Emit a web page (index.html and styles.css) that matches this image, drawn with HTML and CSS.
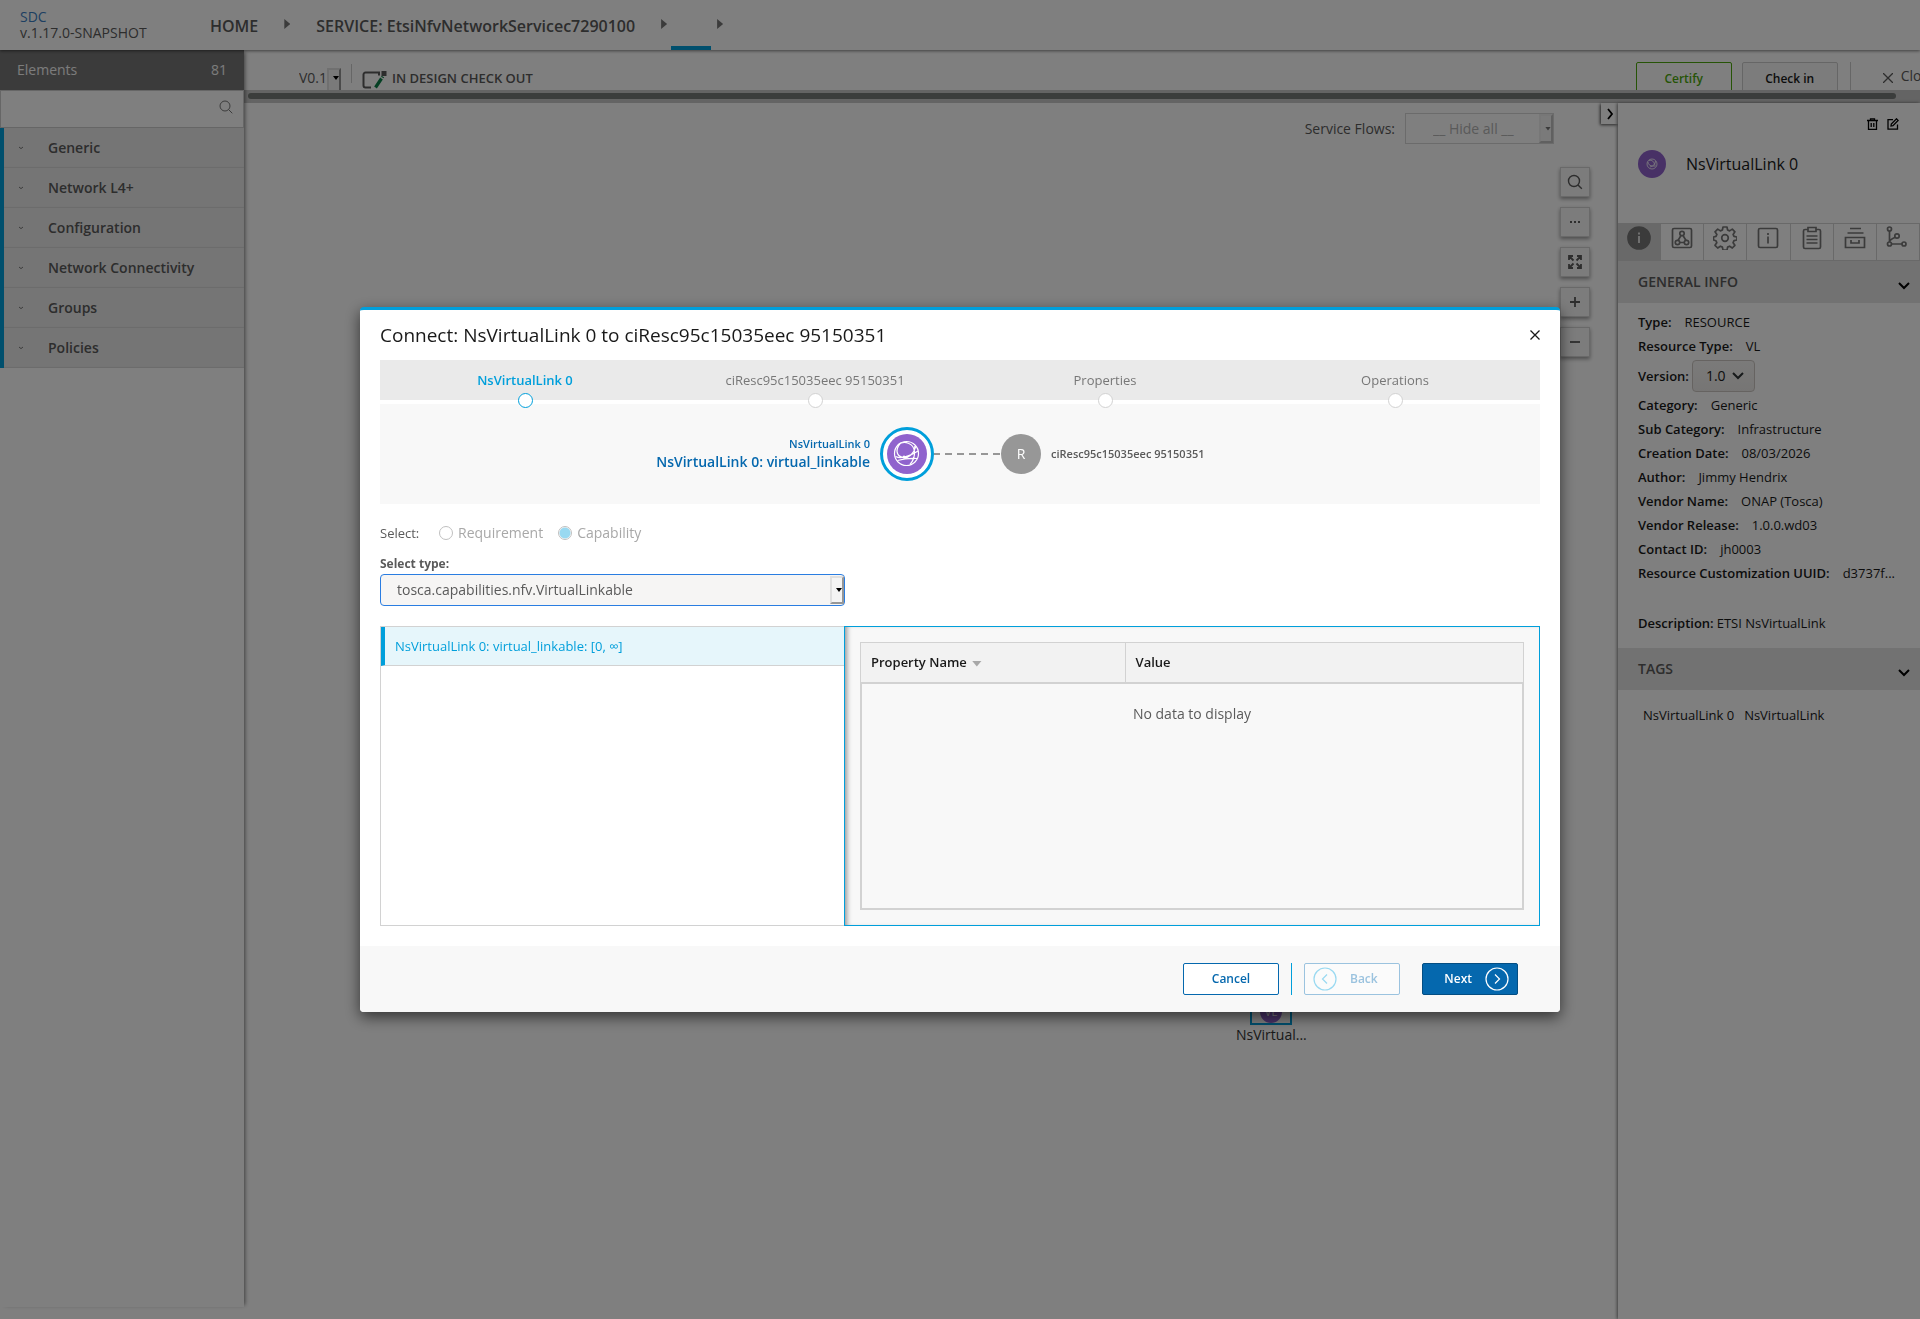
FILE: index.html
```html
<!DOCTYPE html>
<html lang="en">
<head>
<meta charset="utf-8">
<title>SDC</title>
<link rel="stylesheet" href="styles.css">
</head>
<body>
<div class="app">
  <header class="topbar">
    <div class="brand"><a class="brand-name" href="#">SDC</a><span class="brand-version">v.1.17.0-SNAPSHOT</span></div>
    <nav class="crumbs">
      <a href="#">HOME</a><i class="crumb-arrow"></i>
      <a href="#">SERVICE: EtsiNfvNetworkServicec7290100</a><i class="crumb-arrow"></i>
      <span class="crumb-current"></span><i class="crumb-arrow last"></i>
    </nav>
  </header>

  <div class="body">
    <aside class="sidebar">
      <div class="sidebar-head"><span>Elements</span><span>81</span></div>
      <div class="search">
        <input type="text" aria-label="Search elements">
        <svg width="14" height="14" viewBox="0 0 14 14"><circle cx="6" cy="6" r="5" /><path d="M9.6 9.6L13.3 13.3"/></svg>
      </div>
      <ul class="groups">
        <li><svg width="6" height="4" viewBox="0 0 6 4"><path d="M1 1l2 1.600L5 1"/></svg>Generic</li>
        <li><svg width="6" height="4" viewBox="0 0 6 4"><path d="M1 1l2 1.600L5 1"/></svg>Network L4+</li>
        <li><svg width="6" height="4" viewBox="0 0 6 4"><path d="M1 1l2 1.600L5 1"/></svg>Configuration</li>
        <li><svg width="6" height="4" viewBox="0 0 6 4"><path d="M1 1l2 1.600L5 1"/></svg>Network Connectivity</li>
        <li><svg width="6" height="4" viewBox="0 0 6 4"><path d="M1 1l2 1.600L5 1"/></svg>Groups</li>
        <li><svg width="6" height="4" viewBox="0 0 6 4"><path d="M1 1l2 1.600L5 1"/></svg>Policies</li>
      </ul>
    </aside>

    <main class="main">
      <div class="toolbar">
        <div class="toolbar-row">
          <div class="picker version-picker"><select aria-label="Version"><option>V0.1</option></select></div>
          <i class="bar-sep"></i>
          <svg class="state-icon" width="25" height="18" viewBox="0 0 25 18"><path d="M9 16.500H3.500a2 2 0 0 1-2-2V3.500a2 2 0 0 1 2-2H17v3" fill="none" stroke="#5a5a5a" stroke-width="2"/><rect x="19.500" y="0" width="5" height="5" fill="#5a5a5a"/><path d="M13.500 16.500l6-9" stroke="#0a8048" stroke-width="3.200"/><path d="M20.300 6.500l.6-.9" stroke="#0a8048" stroke-width="3"/></svg>
          <span class="state">IN DESIGN CHECK OUT</span>
          <div class="toolbar-actions">
            <button class="btn certify">Certify</button>
            <button class="btn checkin">Check in</button>
            <i class="bar-sep tall"></i>
            <button class="close-link"><svg width="10" height="10" viewBox="0 0 10 10"><path d="M0 0L10 10M10 0L0 10"/></svg>Close</button>
          </div>
        </div>
      </div>
      <div class="scroll-track"><div class="scroll-thumb"></div></div>

      <div class="workspace">
        <section class="canvas">
          <div class="flows">
            <label for="flows">Service Flows:</label>
            <div class="picker flow-picker"><select id="flows" disabled><option>__ Hide all __</option></select></div>
          </div>
          <div class="zoom-tools">
            <button aria-label="Search"><svg width="16" height="16" viewBox="0 0 16 16"><circle cx="7" cy="7" r="5.500"/><path d="M11 11l3.800 3.800"/></svg></button>
            <button aria-label="More"><svg width="16" height="16" viewBox="0 0 16 16"><path stroke-width="2" d="M3 8h2M7 8h2M11 8h2"/></svg></button>
            <button aria-label="Fit"><svg width="16" height="16" viewBox="0 0 16 16"><path stroke-width="1.800" d="M2 6V2h4M2 2l4.500 4.500M10 2h4v4M14 2L9.500 6.500M2 10v4h4M2 14l4.500-4.500M14 10v4h-4M14 14L9.500 9.500"/></svg></button>
            <button aria-label="Zoom in"><svg width="16" height="16" viewBox="0 0 16 16"><path stroke-width="1.800" d="M8 3v10M3 8h10"/></svg></button>
            <button aria-label="Zoom out"><svg width="16" height="16" viewBox="0 0 16 16"><path stroke-width="1.800" d="M3 8h10"/></svg></button>
          </div>
          <div class="node"><div class="node-box"><span>VL</span></div><div class="node-name">NsVirtual...</div></div>
          <button class="collapse" aria-label="Collapse panel"><svg width="8" height="12" viewBox="0 0 8 12"><path d="M2 1l4 5-4 5"/></svg></button>
        </section>

        <aside class="details">
          <div class="details-tools">
            <button aria-label="Delete"><svg width="11" height="12" viewBox="0 0 11 12"><path d="M0 2.500h11M3.500 2.500V.8h4v1.700M1.500 2.500v8.800h8V2.500M4.200 5v4M6.800 5v4"/></svg></button>
            <button aria-label="Edit"><svg width="12" height="12" viewBox="0 0 12 12"><path d="M6 1.700H1v9.500h9.500V6.500M4 8l.3-2L9.500.8l1.600 1.600L6 7.700z"/></svg></button>
          </div>
          <div class="details-title">
            <svg width="28" height="28" viewBox="0 0 28 28"><circle cx="14" cy="14" r="14" fill="#9063cd"/><g fill="none" stroke="#fff" stroke-width=".8"><circle cx="14" cy="14" r="5"/><path d="M11 10.500c3-1 5 1 6 5M17.500 11c0 3-2 5-5.500 6M10 12c0 3 3 4.500 7.500 4"/></g></svg>
            <h2>NsVirtualLink 0</h2>
          </div>
          <div class="tabs">
            <button class="active" aria-label="Information"><svg width="24" height="24" viewBox="0 0 24 24"><circle cx="12" cy="12" r="11" fill="#777"/><path d="M12 10v7M12 6.500v2" stroke="#e0e0e0" stroke-width="2"/></svg></button>
            <button aria-label="Composition"><svg width="24" height="24" viewBox="0 0 24 24"><rect x="2.500" y="2.500" width="19" height="19" rx="1.500"/><circle cx="12" cy="7.500" r="2.200"/><circle cx="7.500" cy="16.500" r="2.200"/><circle cx="16.500" cy="16.500" r="2.200"/><path d="M11 9.500l-3 5M13 9.500l3 5M10 16.500h4"/></svg></button>
            <button aria-label="Properties"><svg width="24" height="24" viewBox="0 0 24 24"><circle cx="12" cy="12" r="3.300"/><path d="M10 1h4l.6 3 2 .9 2.700-1.800 2.600 2.700-1.800 2.600.9 2 3 .6v3l-3 .7-.9 2 1.800 2.600-2.600 2.700-2.700-1.800-2 .9-.6 3h-4l-.6-3-2-.9L4.700 22 2 19.300l1.800-2.600-.9-2L.5 14v-3l2.500-.6.9-2L2 5.800l2.700-2.700 2.700 1.800 2-.9z" stroke-linejoin="round"/></svg></button>
            <button aria-label="Inputs"><svg width="24" height="24" viewBox="0 0 24 24"><rect x="2.500" y="2.500" width="19" height="19" rx="1.500"/><path d="M12 10.500v7M12 7v2"/></svg></button>
            <button aria-label="Artifacts"><svg width="24" height="24" viewBox="0 0 24 24"><path d="M8 3.500H5A1.500 1.500 0 0 0 3.500 5v16A1.500 1.500 0 0 0 5 22.500h14a1.500 1.500 0 0 0 1.500-1.500V5A1.500 1.500 0 0 0 19 3.500h-3M8 1.500h8v4H8zM6.500 10h11M6.500 13.500h11M6.500 17h11"/></svg></button>
            <button aria-label="Requirements"><svg width="24" height="24" viewBox="0 0 24 24"><path d="M7 2.500h11M4.500 7h16M2.500 11.500h19v10h-19zM8 14v3h8v-3"/></svg></button>
            <button aria-label="Dependencies"><svg width="24" height="24" viewBox="0 0 24 24"><circle cx="3.500" cy="3" r="2"/><circle cx="3.500" cy="18" r="2"/><circle cx="18" cy="18" r="2"/><circle cx="11" cy="10" r="2.200"/><path d="M3.500 5v11M5.500 18H16M9.300 11.300C6 12.500 3.800 14 3.600 16"/></svg></button>
          </div>
          <div class="section-head"><span>GENERAL INFO</span><svg width="12" height="8" viewBox="0 0 12 8"><path d="M1 1l5 5 5-5"/></svg></div>
          <dl class="facts">
            <div><dt>Type:</dt><dd>RESOURCE</dd></div>
            <div><dt>Resource Type:</dt><dd>VL</dd></div>
            <div class="fact-version"><dt><label for="ver">Version:</label></dt><dd><select id="ver"><option>1.0</option></select><svg width="12" height="8" viewBox="0 0 12 8"><path d="M1 1l5 5 5-5"/></svg></dd></div>
            <div><dt>Category:</dt><dd>Generic</dd></div>
            <div><dt>Sub Category:</dt><dd>Infrastructure</dd></div>
            <div><dt>Creation Date:</dt><dd>08/03/2026</dd></div>
            <div><dt>Author:</dt><dd>Jimmy Hendrix</dd></div>
            <div><dt>Vendor Name:</dt><dd>ONAP (Tosca)</dd></div>
            <div><dt>Vendor Release:</dt><dd>1.0.0.wd03</dd></div>
            <div><dt>Contact ID:</dt><dd>jh0003</dd></div>
            <div><dt>Resource Customization UUID:</dt><dd>d3737f...</dd></div>
            <div class="fact-description"><dt>Description:</dt><dd>ETSI NsVirtualLink</dd></div>
          </dl>
          <div class="section-head"><span>TAGS</span><svg width="12" height="8" viewBox="0 0 12 8"><path d="M1 1l5 5 5-5"/></svg></div>
          <div class="tags"><span>NsVirtualLink 0</span><span>NsVirtualLink</span></div>
        </aside>
      </div>
    </main>
  </div>
</div>

<div class="overlay">
  <div class="modal" role="dialog" aria-labelledby="modal-title">
    <div class="modal-body">
      <div class="modal-head">
        <h1 id="modal-title">Connect: NsVirtualLink 0 to ciResc95c15035eec 95150351</h1>
        <button class="modal-close" aria-label="Close"><svg width="10" height="10" viewBox="0 0 10 10"><path d="M.5.500l9 9M9.500.500l-9 9"/></svg></button>
      </div>
      <ol class="steps">
        <li class="current">NsVirtualLink 0</li>
        <li>ciResc95c15035eec 95150351</li>
        <li>Properties</li>
        <li>Operations</li>
      </ol>
      <div class="link-view">
        <div class="link-from"><span class="from-name">NsVirtualLink 0</span><span class="from-cap">NsVirtualLink 0: virtual_linkable</span></div>
        <div class="ring"><svg width="40" height="40" viewBox="0 0 40 40"><circle cx="20" cy="20" r="20" fill="#9063cd"/><g fill="none" stroke="#fff" stroke-width="1.200"><circle cx="19.500" cy="19.500" r="12"/><path d="M11 10.800C17 6 27 9 27.500 18c.3 5-1.500 9-4.500 12.500M13.500 9c-5 6-5 13 2.500 14.500 6 1 11-4 12.500-10.500M17 23c5-1 10-3.500 14-6M8.500 22.500c3 1.500 6 1.500 9 .5M10.500 26.500c7-2 14-2.500 20-2"/></g><circle cx="17" cy="23" r="1.500" fill="#fff"/><circle cx="28" cy="13" r="1.100" fill="#fff"/></svg></div>
        <svg class="dash" width="67" height="2" viewBox="0 0 67 2"><path d="M0 1h67" stroke="#979797" stroke-width="2" stroke-dasharray="7 5" stroke-dashoffset="1"/></svg>
        <div class="r-badge">R</div>
        <div class="link-to">ciResc95c15035eec 95150351</div>
      </div>
      <fieldset class="kind">
        <legend>Select:</legend>
        <label><input type="radio" name="kind" disabled>Requirement</label>
        <label><input type="radio" name="kind" checked disabled>Capability</label>
      </fieldset>
      <label class="type-label" for="type">Select type:</label>
      <div class="picker type-picker"><select id="type"><option>tosca.capabilities.nfv.VirtualLinkable</option></select></div>
      <div class="panes">
        <ul class="cap-list"><li>NsVirtualLink 0: virtual_linkable: [0, ∞]</li></ul>
        <div class="props">
          <table>
            <thead><tr><th class="col-name">Property Name<i class="sort"></i></th><th>Value</th></tr></thead>
            <tbody><tr><td colspan="2">No data to display</td></tr></tbody>
          </table>
        </div>
      </div>
    </div>
    <footer class="modal-foot">
      <button class="btn cancel">Cancel</button>
      <i class="foot-sep"></i>
      <button class="btn back" disabled><svg width="24" height="24" viewBox="0 0 24 24"><circle cx="12" cy="12" r="11"/><path d="M14 7.500L9.500 12l4.500 4.500"/></svg><span>Back</span></button>
      <button class="btn next"><span>Next</span><svg width="24" height="24" viewBox="0 0 24 24"><circle cx="12" cy="12" r="11"/><path d="M10 7.500l4.500 4.500-4.500 4.500"/></svg></button>
    </footer>
  </div>
</div>
</body>
</html>
```
FILE: styles.css
```css
* { box-sizing: border-box; }
body, h1, h2, ul, ol, dl, dd, fieldset { margin: 0; padding: 0; }
ul, ol { list-style: none; }
fieldset { border: 0; }
body {
  font-family: "Open Sans", "Noto Sans", sans-serif;
  font-size: 13px;
  line-height: 18px;
  color: #5a5a5a;
  background: #fff;
}
button, input, select { font: inherit; color: inherit; margin: 0; }
button { padding: 0; border: 0; background: none; }
a { color: inherit; text-decoration: none; }
svg { display: block; flex: none; fill: none; }

.app { display: flex; flex-direction: column; height: 100vh; overflow: hidden; }

/* top bar */
.topbar {
  position: relative;
  z-index: 2;
  display: flex;
  height: 50px;
  padding-left: 20px;
  background: #fff;
  box-shadow: 0 1px 3px rgba(0, 0, 0, .5);
}
.brand { display: flex; flex-direction: column; width: 190px; padding-top: 9px; font-size: 14px; line-height: 16px; }
.brand-name { color: #3b7fc4; }
.crumbs { display: flex; align-items: center; font-size: 16px; font-weight: 600; }
.crumbs a { padding-top: 2px; }
.crumb-arrow { width: 6px; height: 10px; margin: 0 26px 2px; background: #777; clip-path: polygon(0 0, 100% 50%, 0 100%); }
.crumb-arrow.last { margin-left: 6px; }
.crumb-current { align-self: flex-end; width: 40px; height: 4px; margin-left: -22px; background: #009fdb; }

.body { display: flex; flex: 1; min-height: 0; }

/* element palette */
.sidebar { position: relative; z-index: 1; width: 244px; flex: none; margin-bottom: 12px; background: #fff; box-shadow: 3px 0 4px -2px rgba(0, 0, 0, .5); }
.sidebar-head { display: flex; justify-content: space-between; align-items: center; height: 40px; padding: 0 17px; background: #777; color: #f8f8f8; font-size: 14px; }
.search { position: relative; height: 38px; }
.search input { display: block; width: 100%; height: 38px; border: 1px solid #cdcdcd; background: #fff; }
.search svg { position: absolute; right: 11px; top: 10px; stroke: #777; }
.groups li {
  display: flex; align-items: center; gap: 24px;
  height: 40px; padding-left: 14px;
  border-left: 4px solid #009fdb;
  background: #eaeaea;
  box-shadow: inset 0 -1px 1px #d8d8d8;
  font-size: 14px; font-weight: 600;
}
.groups svg { stroke: #777; stroke-width: 1; }

/* toolbar */
.main { display: flex; flex-direction: column; flex: 1; min-width: 0; }
.toolbar { height: 40px; overflow: hidden; }
.toolbar-row { display: flex; align-items: flex-start; width: calc(100% + 16px); padding-left: 55px; padding-top: 12px; }
.picker { position: relative; }
.picker select { display: block; width: 100%; height: 100%; appearance: none; border: 0; background: none; outline: 0; }
.picker::after {
  content: "";
  position: absolute; right: 0; top: 0; bottom: 0; width: 10px;
  border: 2px solid;
  border-color: #e0e0e0 #979797 #979797 #e0e0e0;
  background: #f4f4f4;
  pointer-events: none;
}
.picker::before {
  content: "";
  position: absolute; z-index: 1; right: 2px; top: 50%; width: 6px; height: 4px;
  margin-top: -2px;
  background: #000;
  clip-path: polygon(0 0, 100% 0, 50% 100%);
  pointer-events: none;
}
.version-picker { width: 42px; height: 32px; font-size: 14px; }
.version-picker::after { top: 6px; }
.bar-sep { width: 1px; height: 19px; margin: 2px 10px 0; background: #cdcdcd; }
.bar-sep.tall { height: 32px; margin: 0 32px 0 12px; }
.state-icon { margin-top: 9px; }
.state { margin: 7px 0 0 5px; font-size: 13px; font-weight: 600; }
.toolbar-actions { display: flex; margin-left: auto; }
.btn { height: 32px; width: 96px; border: 1px solid #cdcdcd; border-radius: 2px; font-size: 12px; font-weight: 600; }
.certify, .checkin { padding-top: 2px; }
.certify { margin-right: 10px; border-color: #4ca90c; color: #4ca90c; }
.checkin { color: #191919; background: #f8f8f8; }
.close-link { display: flex; align-items: center; gap: 8px; height: 32px; font-size: 14px; padding-bottom: 4px; }
.close-link svg { stroke: #5a5a5a; stroke-width: 1.3; margin-top: 4px; }
.scroll-track { height: 13px; padding: 3px 24px 0 4px; background: #c8c8c8; }
.scroll-thumb { height: 6px; border-radius: 3px; background: #767b78; }

/* canvas */
.workspace { display: flex; flex: 1; min-height: 0; }
.canvas { position: relative; flex: 1; min-width: 0; }
.flows { display: flex; justify-content: flex-end; align-items: center; gap: 10px; padding: 10px 64px 0 0; font-size: 14px; }
.flow-picker { width: 149px; height: 31px; border: 1px solid #d6d6d6; color: #b4b4b4; }
.flow-picker select { padding-left: 27px; opacity: 1; }
.flow-picker::before { background: #777; }
.flow-picker::after { border-color: #eee #c0c0c0 #c0c0c0 #eee; }
.zoom-tools { display: flex; flex-direction: column; align-items: flex-end; gap: 10px; padding: 23px 28px 0 0; }
.zoom-tools button {
  display: grid; place-items: center;
  width: 30px; height: 30px;
  border: 1px solid #d2d2d2;
  background: #f8f8f8;
  box-shadow: 0 2px 4px rgba(0, 0, 0, .4);
}
.zoom-tools svg { stroke: #5a5a5a; stroke-width: 1.4; }
.node { position: absolute; left: 992px; top: 877px; width: 70px; text-align: center; font-size: 14px; color: #333; }
.node-box { display: grid; place-items: center; width: 42px; height: 45px; margin: 0 auto 1px; border: 2px solid #009fdb; }
.node-box span { width: 22px; height: 22px; border-radius: 50%; background: #9063cd; color: #fff; font-size: 11px; line-height: 22px; margin-top: 18px; }
.collapse {
  position: absolute; right: 0; top: 0;
  display: grid; place-items: center;
  width: 17px; height: 21px; background: #fff;
  box-shadow: -1px 1px 3px rgba(0, 0, 0, .7);
}
.collapse svg { stroke: #000; stroke-width: 1.8; }

/* details panel */
.details { position: relative; width: 302px; flex: none; background: #fff; box-shadow: -1px 0 3px rgba(0, 0, 0, .5); color: #191919; }
.details-tools { display: flex; justify-content: flex-end; gap: 9px; padding: 15px 21px 0 0; }
.details-tools svg { stroke: #000; stroke-width: 1.3; }
.details-title { display: flex; align-items: center; gap: 20px; height: 93px; padding: 0 20px 26px; }
.details-title h2 { font-size: 16px; font-weight: 400; }
.tabs { display: flex; height: 38px; border: solid #d2d2d2; border-width: 1px 0; }
.tabs button { display: flex; justify-content: center; flex: 1; padding-top: 2px; border-right: 1px solid #d2d2d2; }
.tabs button.active { background: #d2d2d2; }
.tabs svg { stroke: #777; stroke-width: 1.7; }
.section-head { display: flex; justify-content: space-between; align-items: center; height: 42px; padding: 0 10px 0 20px; background: #e4e4e4; color: #5a5a5a; font-size: 14px; font-weight: 600; }
.section-head svg { margin-top: 8px; stroke: #000; stroke-width: 2; }
.facts { padding: 7px 20px 13px; }
.facts > div { display: flex; align-items: center; gap: 13px; height: 24px; white-space: nowrap; }
.facts dt { font-weight: 600; }
.facts .fact-version { height: 35px; gap: 3px; }
.fact-version dd { display: flex; align-items: center; width: 63px; height: 32px; border: 1px solid #cdc7c2; border-radius: 4px; background: linear-gradient(#f6f5f4, #edebe9); }
.fact-version select { width: 39px; appearance: none; border: 0; padding: 0 0 0 13px; background: none; font-size: 14px; }
.fact-version svg { stroke: #2e3436; stroke-width: 2; }
.facts .fact-description { gap: 3px; margin-top: 26px; }
.tags { display: flex; gap: 10px; padding: 16px 25px; }

/* dialog */
.overlay { position: fixed; inset: 0; z-index: 10; display: flex; justify-content: center; align-items: center; background: rgba(0, 0, 0, .5); }
.modal { width: 1200px; border-top: 3px solid #009fdb; border-radius: 4px; background: #fff; box-shadow: 0 5px 15px rgba(0, 0, 0, .6); overflow: hidden; }
.modal-body { padding: 0 20px 20px; }
.modal-head { display: flex; justify-content: space-between; align-items: center; height: 50px; color: #191919; }
.modal-head h1 { font-size: 19px; font-weight: 400; }
.modal-close svg { stroke: #191919; stroke-width: 1.3; }
.steps { display: flex; height: 40px; background: #eaeaea; color: #777; }
.steps li { position: relative; flex: 1; text-align: center; line-height: 40px; }
.steps li::after {
  content: "";
  position: absolute; left: 50%; bottom: -8px; width: 13px; height: 13px; margin-left: -7px;
  border: 1px solid #d2d2d2; border-radius: 50%; background: #fff;
}
.steps .current { color: #009fdb; font-weight: 600; }
.steps .current::after { border-color: #009fdb; }
.link-view { display: flex; align-items: center; height: 100px; margin-top: 4px; background: #f8f8f8; }
.link-from { display: flex; flex-direction: column; align-items: flex-end; width: 490px; padding-bottom: 2px; color: #0568ae; font-weight: 600; }
.from-name { font-size: 11px; }
.from-cap { font-size: 14px; }
.ring { margin-left: 10px; padding: 4px; border: 3px solid #009fdb; border-radius: 50%; background: #fff; }
.r-badge { width: 40px; height: 40px; border-radius: 50%; background: #979797; color: #fff; font-size: 14px; line-height: 40px; text-align: center; }
.link-to { margin-left: 10px; font-size: 11px; font-weight: 600; }
.kind { display: flex; align-items: center; height: 58px; }
.kind legend { float: left; width: 59px; padding: 0; }
.kind label { display: flex; align-items: center; margin-right: 15px; color: #a8a8a8; font-size: 14px; }
.kind input { appearance: none; width: 14px; height: 14px; margin-right: 5px; border: 1px solid #c0c0c0; border-radius: 50%; background: #fff; }
.kind input:checked { background: radial-gradient(circle, #99d9f1 5px, #fff 6px); }
.type-label { display: block; height: 12px; line-height: 4px; font-size: 12px; font-weight: 700; }
.type-picker { width: 465px; height: 32px; padding: 1px; border: 1px solid #2a7de1; border-radius: 4px; background: #f6f5f4; font-size: 14px; }
.type-picker select { padding-left: 15px; }
.type-picker::after { top: 1px; bottom: 1px; }
.panes { display: flex; height: 300px; margin-top: 20px; }
.cap-list { width: 464px; border: 1px solid #d2d2d2; border-right: 0; }
.cap-list li { height: 39px; padding-left: 10px; border-left: 4px solid #009fdb; border-bottom: 1px solid #d2d2d2; background: #e6f6fb; color: #009fdb; line-height: 38px; }
.props { flex: 1; padding: 15px; border: 1px solid #009fdb; background: #f8f8f8; box-shadow: inset 5px 0 5px -3px rgba(0, 0, 0, .4); }
table { width: 100%; height: 268px; table-layout: fixed; border-spacing: 0; }
th { height: 40px; padding: 0 10px 2px; border: 1px solid #d2d2d2; border-bottom: 0; border-left: 0; background: #f2f2f2; color: #191919; font-weight: 600; text-align: left; }
.col-name { width: 40%; border-left: 1px solid #d2d2d2; }
.sort { display: inline-block; width: 10px; height: 6px; margin-left: 5px; background: #a8a8a8; clip-path: polygon(0 0, 100% 0, 50% 100%); }
td { padding: 21px; border: 2px solid #d2d2d2; font-size: 14px; text-align: center; vertical-align: top; }
.modal-foot { display: flex; justify-content: flex-end; align-items: center; height: 66px; padding-right: 42px; background: #f8f8f8; }
.modal-foot .btn { padding-bottom: 1px; }
.cancel { border-color: #0568ae; background: #fff; color: #0568ae; }
.foot-sep { width: 1px; height: 32px; margin: 0 12px; background: #009fdb; }
.back, .next { display: flex; align-items: center; }
.back { padding-left: 8px; gap: 13px; border-color: #9bc3df; background: #fbfbfb; color: #9bc3df; }
.back svg { stroke: #99d9f1; stroke-width: 1.2; }
.next { margin-left: 22px; justify-content: flex-end; padding-right: 8px; gap: 13px; border-color: #044e83; background: #0568ae; color: #fff; }
.next svg { stroke: #fff; stroke-width: 1.2; }
```
